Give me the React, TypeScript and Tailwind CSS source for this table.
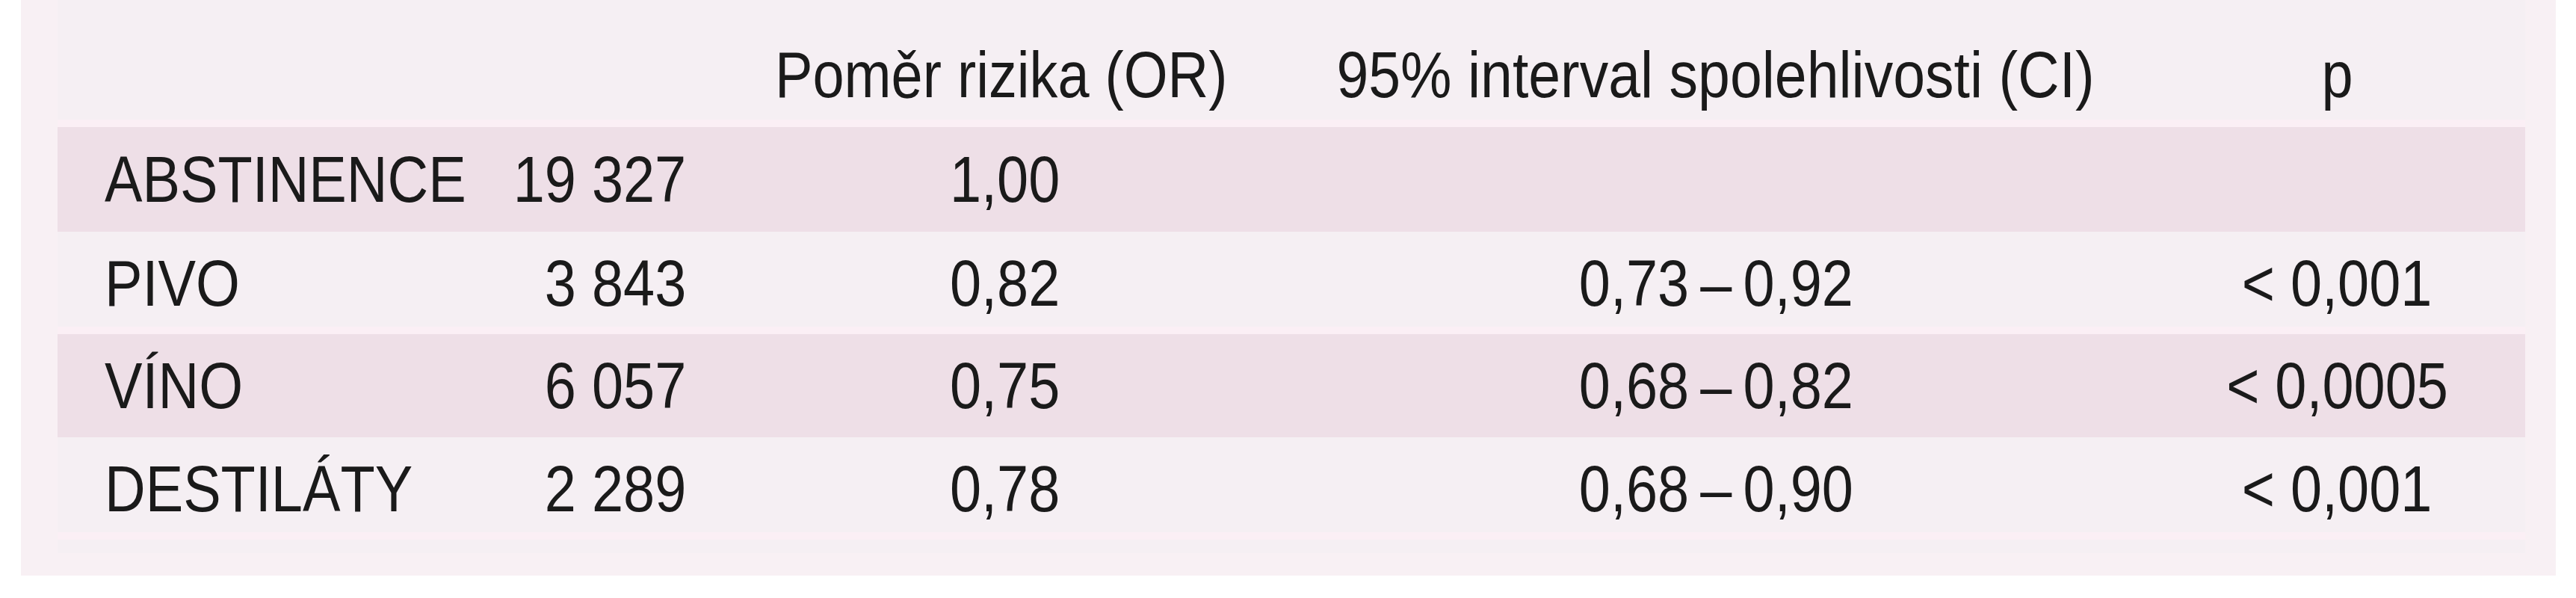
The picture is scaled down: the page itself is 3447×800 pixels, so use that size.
const rows = [
    { label: 'ABSTINENCE', n: '19 327', or: '1,00', ci: '', p: '', shaded: true, h: 'h-[140px]' },
    { label: 'PIVO', n: '3 843', or: '0,82', ci: '0,73\u2009–\u20090,92', p: '< 0,001', shaded: false, h: 'h-[137px]' },
    { label: 'VÍNO', n: '6 057', or: '0,75', ci: '0,68\u2009–\u20090,82', p: '< 0,0005', shaded: true, h: 'h-[138px]' },
    { label: 'DESTILÁTY', n: '2 289', or: '0,78', ci: '0,68\u2009–\u20090,90', p: '< 0,001', shaded: false, h: 'h-[137px]' },
];

const grid = 'grid grid-cols-[523px_318px_798px_1160px_503px] whitespace-nowrap';

// the print font is a squeezed Helvetica, so the glyphs get narrowed a bit
const left = 'inline-block scale-x-[0.86] origin-left';
const right = 'inline-block scale-x-[0.86] origin-right';
const center = 'inline-block scale-x-[0.86] origin-center';

const App = () => {
    return (
        <div className="min-h-screen bg-white font-['Liberation_Sans',Arial,sans-serif] text-[88px] leading-none text-[#1a1a1a]">
            <div className="ml-[28px] w-[3392px] h-[770px] bg-[#f8f0f4] pl-[49px]">
                <div className="w-[3302px] bg-[#f5eff3]">
                    <div className={`${grid} h-[170px] items-start pt-[56px] shadow-[inset_0_-10px_0_#fbeff5]`}>
                        <div />
                        <div />
                        <div className="pl-[119px]">
                            <span className={left}>Poměr rizika (OR)</span>
                        </div>
                        <div className="text-center">
                            <span className="inline-block scale-x-[0.875] origin-center">
                                95% interval spolehlivosti (CI)
                            </span>
                        </div>
                        <div className="text-center">
                            <span className={center}>p</span>
                        </div>
                    </div>
                    {rows.map((r) => (
                        <div
                            key={r.label}
                            className={`${grid} ${r.h} items-center ${
                                r.shaded
                                    ? 'bg-[#eedfe7]'
                                    : 'bg-[#f5eff3] shadow-[inset_0_-10px_0_#fbeff5]'
                            }`}
                        >
                            <div className="pl-[63px]">
                                <span className={left}>{r.label}</span>
                            </div>
                            <div className="text-right">
                                <span className={right}>{r.n}</span>
                            </div>
                            <div className="text-right pr-[298px]">
                                <span className={right}>{r.or}</span>
                            </div>
                            <div className="text-center">
                                <span className={center}>{r.ci}</span>
                            </div>
                            <div className="text-center">
                                <span className={center}>{r.p}</span>
                            </div>
                        </div>
                    ))}
                    <div className="h-[18px]" />
                </div>
            </div>
        </div>
    );
};

export default App;
